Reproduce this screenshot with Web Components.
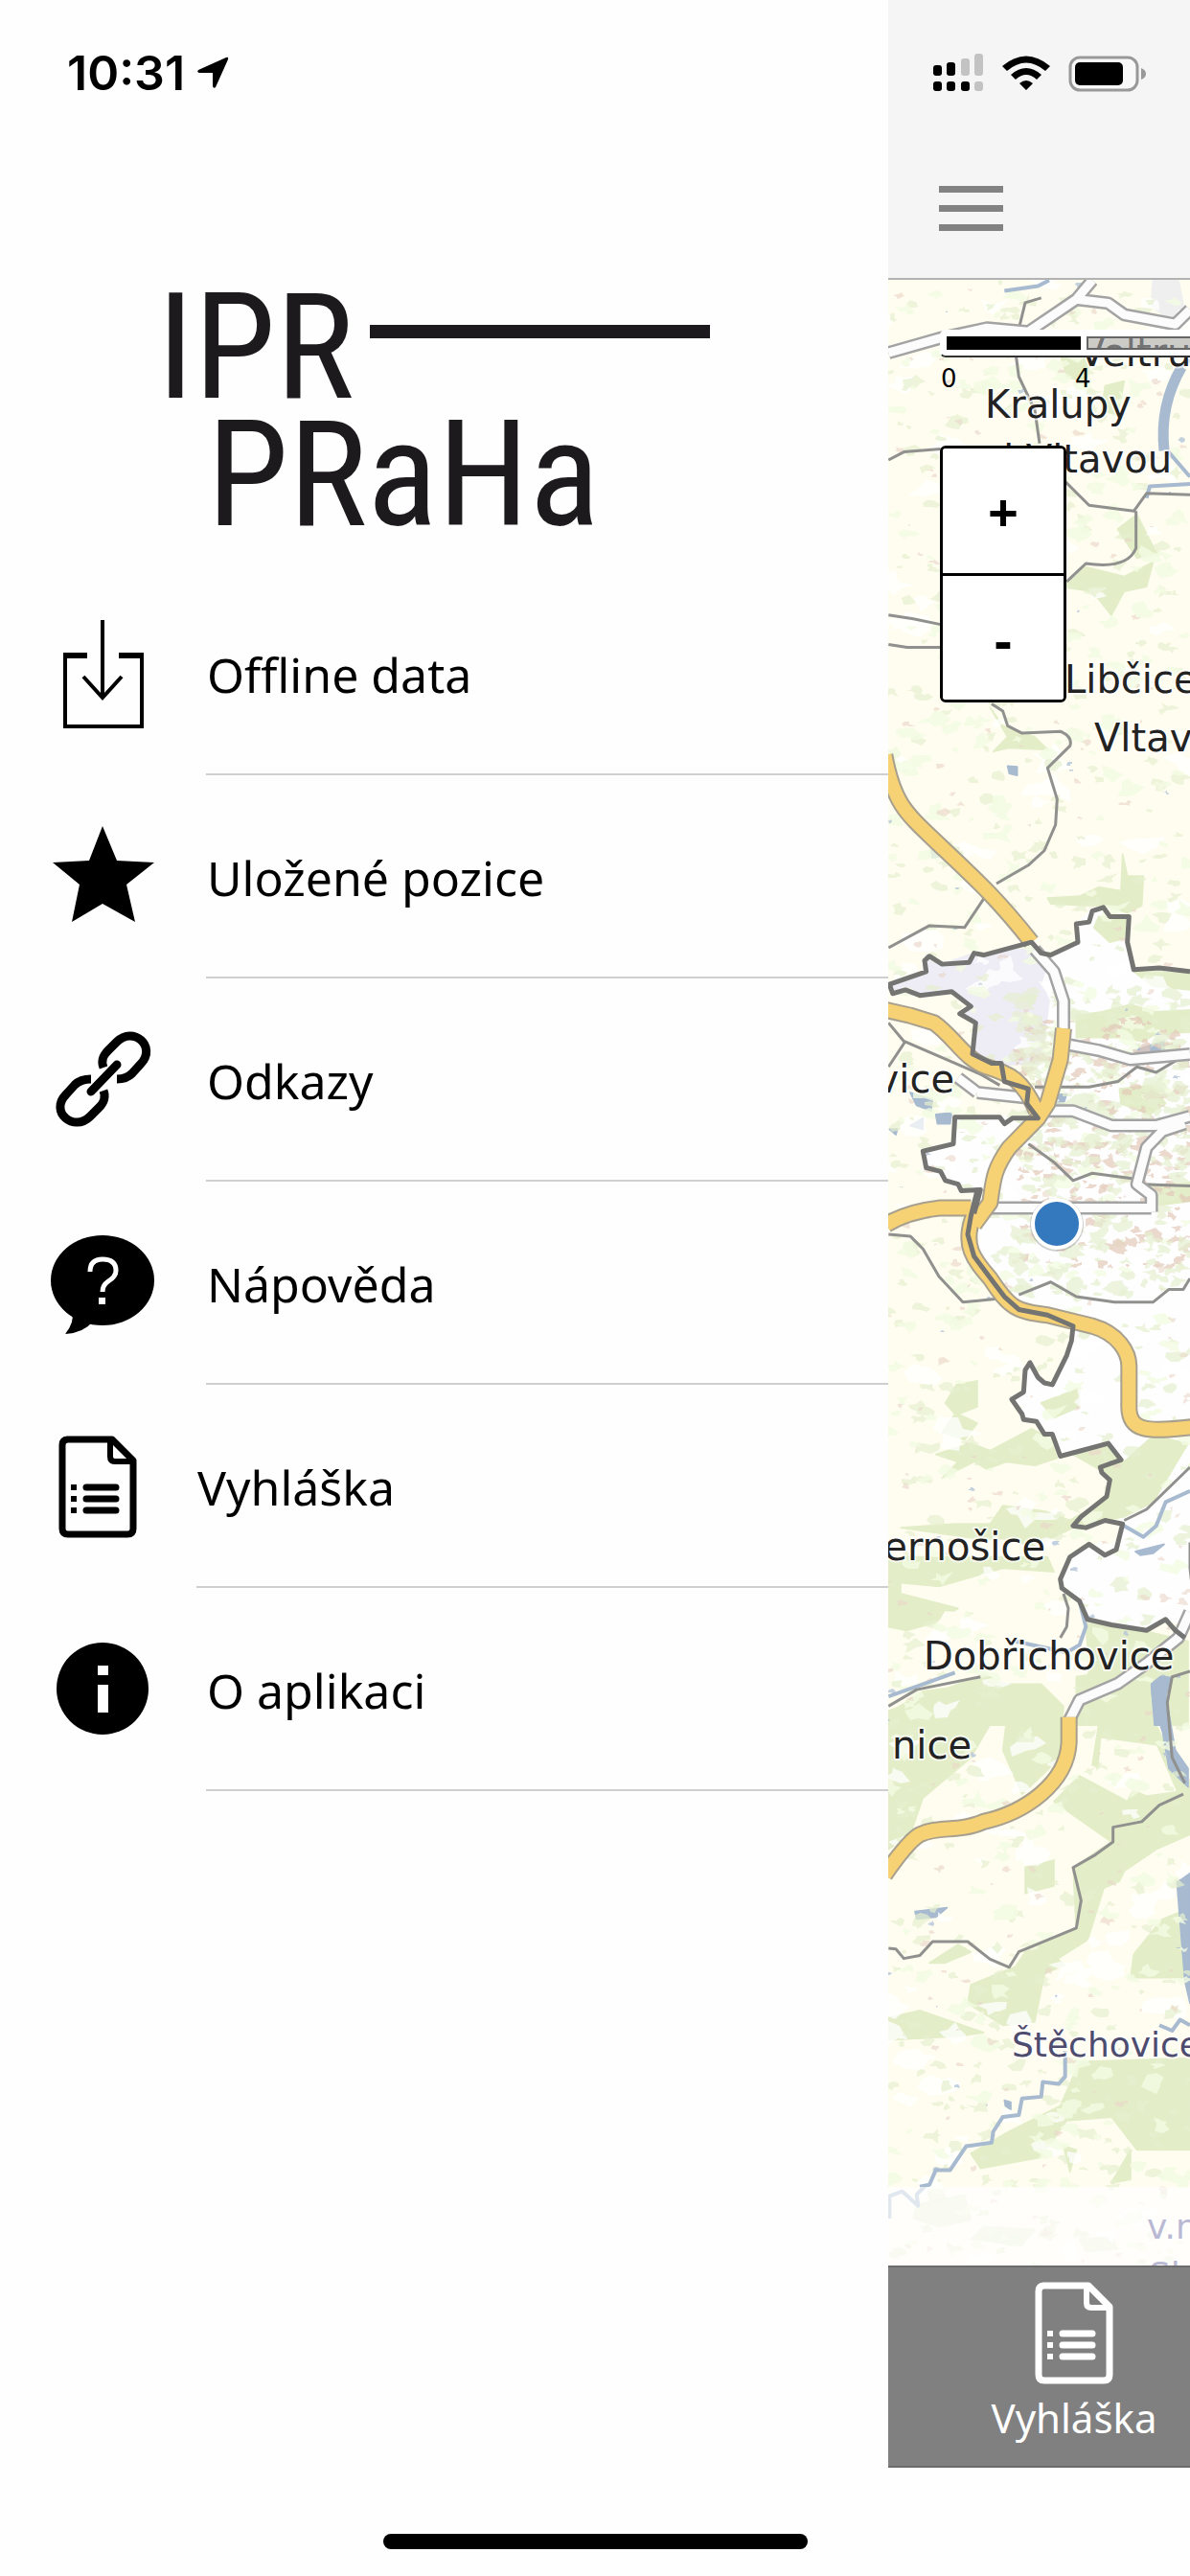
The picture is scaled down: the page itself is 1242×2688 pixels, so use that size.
<!DOCTYPE html>
<html lang="cs">
<head>
<meta charset="utf-8">
<meta name="viewport" content="width=device-width, initial-scale=1">
<title>IPR Praha</title>
<style>
  html, body { margin: 0; height: 100%; background: #fefefe; }
  body { font-family: "Noto Sans", "Open Sans", sans-serif; color: #000; }
</style>
</head>
<body>
<app-shell>
  <side-drawer slot="drawer">
    <menu-item href="#offline" icon="download">Offline data</menu-item>
    <menu-item href="#pozice" icon="star">Uložené pozice</menu-item>
    <menu-item href="#odkazy" icon="link">Odkazy</menu-item>
    <menu-item href="#napoveda" icon="help">Nápověda</menu-item>
    <menu-item href="#vyhlaska" icon="document">Vyhláška</menu-item>
    <menu-item href="#aplikace" icon="info">O aplikaci</menu-item>
  </side-drawer>
  <app-header slot="main"></app-header>
  <map-view slot="main">
    <scale-line></scale-line>
    <zoom-control></zoom-control>
  </map-view>
  <tab-bar slot="main"><tab-item icon="document">Vyhláška</tab-item></tab-bar>
</app-shell>

<script>
const ICONS = {
  download: ['52 644 110 116', '<g fill="none" stroke="#000"><path stroke-width="4" d="M107 646V725M87 705L107 727L127 705"/><path stroke-width="4" d="M68 681V757H148V681"/><path stroke-width="6" d="M66 683H91M124 683H150"/></g>'],
  star: ['52 856 110 116', '<path d="M107 861L122 897L161 899L132 922L141 961L107 942L75 961L83 922L55 899L93 897Z"/>'],
  link: ['52 1068 110 116', '<g fill="none" stroke="#000" stroke-width="9"><path d="M108 1113C105 1105 108 1100 113 1095L122 1086C139 1069 164 1091 147 1109L138 1119Q132 1125 122 1125"/><path d="M108 1137C111 1145 108 1150 103 1155L94 1164C77 1181 51 1159 69 1141L78 1131Q84 1125 95 1125"/><path stroke-linecap="round" d="M122 1110L95 1138"/></g>'],
  help: ['52 1280 110 116', '<ellipse cx="107" cy="1335" rx="54" ry="47"/><path d="M75 1368Q78 1379 68 1391Q87 1390 97 1378Z"/><path d="M94 1326Q94 1313 107 1313Q121 1313 121 1325Q121 1331 113 1336Q107 1340 107 1347" fill="none" stroke="#fff" stroke-width="5"/><rect x="103" y="1353" width="7" height="7" fill="#fff"/>'],
  document: ['53 1492 100 116', '<g fill="none" stroke="currentColor" stroke-width="7" stroke-linejoin="round"><path d="M71 1501H118L140 1523V1594Q140 1600 134 1600H72Q66 1600 66 1594V1507Q66 1501 72 1501Z"/><path stroke-width="6" d="M116 1502V1519Q116 1524 121 1524H140"/><path stroke-width="7" stroke-linecap="round" d="M91 1551H122M91 1563H122M91 1575H122"/><path stroke-width="6" d="M75 1551H81M75 1563H81M75 1575H81"/></g>'],
  info: ['52 1704 110 116', '<circle cx="107" cy="1761" r="48"/><path fill="#fff" d="M102 1737h11v10h-11zM102 1757h11v29h-11z"/>']
};
const icon = (name, height = 116) => {
  const [box, art] = ICONS[name];
  const width = Math.round(box.split(' ')[2] * height / 116);
  return `<svg viewBox="${box}" width="${width}" height="${height}" aria-hidden="true">${art}</svg>`;
};
const define = (name, html) => customElements.define(name, class extends HTMLElement {
  constructor() {
    super();
    this.attachShadow({ mode: 'open' });
  }
  connectedCallback() {
    this.shadowRoot.innerHTML = typeof html === 'function' ? html(this) : html;
  }
});

define('app-shell', `
  <style>
    :host { display: grid; grid-template-columns: minmax(0, 309fr) minmax(0, 105fr); min-height: 100vh; position: relative; overflow: hidden; }
    main { display: flex; flex-direction: column; padding-bottom: 113px; overflow: hidden; }
    .home { position: absolute; bottom: 28px; left: 50%; width: 443px; height: 16px; margin-left: -221px; border-radius: 8px; background: #000; }
  </style>
  <slot name="drawer"></slot>
  <main><slot name="main"></slot></main>
  <div class="home"></div>`);

define('side-drawer', `
  <style>
    :host { display: flex; flex-direction: column; background: #fefefe; }
    ipr-logo { margin: 144px 0 0 164px; }
    nav { display: flex; flex-direction: column; margin-top: 29px; }
  </style>
  <status-clock></status-clock>
  <ipr-logo></ipr-logo>
  <nav><slot></slot></nav>`);

define('status-clock', `
  <style>
    :host { display: flex; align-items: center; gap: 12px; height: 152px; padding-left: 70px; font: 600 50px Inter, "Liberation Sans", sans-serif; }
  </style>
  <time>10:31</time>
  <svg width="34" height="34" viewBox="0 0 34 34" aria-hidden="true"><path d="M31 1Q34 0 33 3L20 32Q18 34 17 31V17H3Q0 16 2 14Z"/></svg>`);

define('ipr-logo', `
  <style>
    :host { display: block; height: 272px; color: #1d1a1d; font: 400 154px/133px "Roboto Condensed", "Liberation Sans Narrow", "Liberation Sans", sans-serif; }
    .top { display: flex; align-items: center; gap: 16px; }
    .rule { width: 355px; height: 14px; margin-bottom: 34px; background: #1d1a1d; }
    .bottom { padding-left: 52px; }
  </style>
  <div class="top"><span>IPR</span><div class="rule"></div></div>
  <div class="bottom">PRaHa</div>`);

define('menu-item', host => `
  <style>
    :host { display: block; }
    a { display: flex; align-items: stretch; gap: 53px; height: 212px; padding-left: 52px; color: #000; text-decoration: none; font-size: 50px; line-height: 68px; }
    svg { flex: none; align-self: center; }
    span { display: flex; align-items: center; flex: 1; box-sizing: border-box; padding: 4px 0 0 1px; border-bottom: 2px solid #cfcfd1; }
  </style>
  <a href="${host.getAttribute('href')}">${icon(host.getAttribute('icon'))}<span><slot></slot></span></a>`);

define('app-header', `
  <style>
    :host { display: flex; flex-direction: column; flex: none; box-sizing: border-box; height: 292px; background: #f5f5f5; border-bottom: 2px solid #b2b2b2; }
    .status { display: flex; align-items: center; gap: 19px; padding: 55px 0 0 47px; height: 41px; }
    svg { flex: none; }
    button { display: flex; flex-direction: column; gap: 13px; margin: 98px 0 0 53px; width: 67px; padding: 0; border: 0; background: none; }
    i { height: 7px; width: 100%; background: #828282; }
  </style>
  <div class="status">
    <svg width="53" height="40" viewBox="0 0 53 40" aria-hidden="true"><g fill="#c3c3c3"><rect x="29" y="5" width="9" height="18" rx="3"/><rect x="43" width="9" height="23" rx="3"/><rect x="43" y="29" width="9" height="10" rx="3"/></g><rect y="12" width="9" height="11" rx="3"/><rect x="14" y="9" width="9" height="14" rx="3"/><rect y="29" width="9" height="10" rx="3"/><rect x="14" y="29" width="9" height="10" rx="3"/><rect x="29" y="29" width="9" height="10" rx="3"/></svg>
    <svg width="50" height="40" viewBox="0 0 50 40" aria-hidden="true"><path d="M0 13Q25 -8 50 13L45 18Q25 1 5 18ZM9 22Q25 8 41 22L36 27Q25 17 14 27ZM18 31Q25 25 32 31L25 38Z"/></svg>
    <svg width="82" height="40" viewBox="0 0 82 40" aria-hidden="true"><rect x="2" y="4" width="70" height="34" rx="10" fill="#fff" fill-opacity=".4" stroke="#999" stroke-width="3"/><rect x="7" y="9" width="50" height="24" rx="5"/><path d="M76 15Q81 17 81 21Q81 25 76 27Z" fill="#999"/></svg>
  </div>
  <button aria-label="Menu"><i></i><i></i><i></i></button>`);

define('zoom-control', `
  <style>
    :host { display: flex; flex-direction: column; width: 132px; box-sizing: border-box; border: 3px solid #000; border-radius: 6px; background: #fff; overflow: hidden; }
    button { height: 130px; padding: 0; border: 0; background: #fff; color: #000; font: 700 56px/60px "Noto Sans", sans-serif; }
    button + button { border-top: 3px solid #000; height: 132px; }
  </style>
  <button aria-label="+">+</button><button aria-label="-">-</button>`);

define('scale-line', `
  <style>
    :host { display: block; width: 720px; }
    .bar { display: flex; gap: 6px; height: 14px; padding: 6px; border: 1px solid #fff; border-bottom: 2px solid #333; border-radius: 6px; background: linear-gradient(#fff, #fff) 0 0 / 100% 6px no-repeat, linear-gradient(#fff, #fff) 0 100% / 100% 6px no-repeat, linear-gradient(#fff, #fff) 0 0 / 6px 100% no-repeat, linear-gradient(#fff, #fff) 146px 0 / 6px 100% no-repeat; }
    b { width: 140px; background: #000; }
    i { flex: 1; box-sizing: border-box; border: 2px solid #666; background: rgba(170, 170, 170, .6); }
    .marks { display: flex; font: 26px/32px "DejaVu Sans", sans-serif; padding: 6px 0 0 1px; }
    .marks span { flex: 0 0 140px; }
  </style>
  <div class="bar"><b></b><i></i></div>
  <div class="marks"><span>0</span><span>4</span></div>`);

define('tab-bar', `
  <style>
    :host { display: flex; flex: none; height: 211px; box-sizing: border-box; border: 2px solid #6c6c6c; border-width: 2px 0; background: #808080; overflow: hidden; }
  </style>
  <slot></slot>`);

define('tab-item', host => `
  <style>
    :host { display: block; flex: 0 0 388px; }
    button { display: flex; flex-direction: column; align-items: center; width: 100%; padding: 10px 0 0; border: 0; background: none; color: #fff; font: 42px/58px "Noto Sans", "Open Sans", sans-serif; }
    svg { margin-bottom: 2px; }
  </style>
  <button>${icon(host.getAttribute('icon'))}<span><slot></slot></span></button>`);

const SHEETS = {
  A: 'translate(920 0) scale(.33333 .49744)',
  B: 'translate(920 700) scale(.33333 .38265)',
  C: 'translate(920 1200) scale(.33333 .38265)',
  D: 'translate(920 1700) scale(.33333 .38265)',
  E: 'translate(920 2200) scale(.33333 .33333)'
};
const AREAS = [
  ['B', '#fefefe', 'M480 740L530 775L615 740L610 690L660 650L700 645L715 670L775 670L770 740L790 815L980 820V1580H290L350 1300L490 1220L480 1070Z'],
  ['C', '#fefefe', 'M300 110L270 230L350 360L430 440L600 480L580 560L535 640L490 620L465 580L450 600L445 660L408 680L440 720L485 740L510 775L535 775L560 835L710 800L750 845L685 865L715 900L705 945L755 1020L735 1090L700 1105L650 1075L590 1110L560 1170L620 1220L645 1280L720 1295L830 1310L890 1280L980 1300V0H300Z'],
  ['B', '#fefefe', 'M230 1215H480L350 1330L310 1415L245 1415L200 1390L140 1355L130 1310L225 1290Z'],
  ['B', '#eeecf4', 'M25 855L130 820L140 775L190 800L290 770L320 775L470 740L520 800L500 850L525 900L510 1000L490 1070L380 1075L285 1045L295 960L245 935L280 915L220 875L120 885L35 880Z'],
  ['A', '#efefef', 'M850 588H930L945 640L920 680L845 640Z'],
  ['A', '#e3eec9', 'M560 745L620 760L655 740L640 800L580 790ZM700 810L760 800L740 870L690 860ZM560 1230L640 1190L760 1210L850 1180L830 1230L760 1240L720 1290L660 1240ZM740 1110L800 1080L860 1160L800 1170Z'],
  ['B', '#e3eec9', 'M520 620L620 615L680 590L750 600L755 500L770 560L820 560L815 640L770 660L705 640L640 640L530 635ZM680 670L770 680L760 730L715 740L665 700ZM610 940L690 930L780 910L860 930L966 925V985L860 990L820 1010L740 1000L610 1000ZM790 820L966 825V870L850 860ZM745 1140L850 1130L890 1180L840 1210L750 1180ZM340 100L380 150L480 180L520 215L400 210L350 220L395 180Z'],
  ['C', '#e3eec9', 'M235 640L300 630V700L240 720L300 745L260 790L190 770L230 720L200 690ZM500 690L620 650V700L540 730ZM170 830L280 800L340 820L470 760L530 790L550 840L480 860L390 850L330 870L290 850L190 895L240 850ZM600 830L720 805L760 850L850 780L960 800L850 960L760 1000L700 1010L600 1030L480 1080L380 1060L300 1060L60 1030L230 1020L340 1020L380 970L510 985L590 1010L710 950L720 890L680 870ZM22 1110H520L540 1150L380 1140L180 1190L60 1180L60 1210L240 1250L160 1290L80 1310L22 1300ZM640 1290L840 1315L960 1340V1568H600L450 1480L320 1430L22 1530V1568H600L650 1420ZM850 100L966 90V140L870 150Z'],
  ['D', '#e3eec9', 'M22 230L130 170L300 150L500 150L570 210L560 350L440 450L380 330L390 260L340 260L280 350L130 460L90 560L22 600ZM610 130L840 100V220L880 300L900 360L966 420V560L860 600L760 660L700 770L640 890L510 940L480 1070L380 1080L270 1020L280 970L420 920L450 880L610 820L600 650L720 580L540 470L620 400L770 470L800 420L660 370L680 260L610 250ZM150 910L240 860L280 880L200 910ZM22 1060L120 1040L320 1100L240 1110L22 1120ZM450 650L540 630V700L450 720ZM800 820L966 760V950H780ZM620 1180L966 1170V1420H800L720 1330L580 1340L500 1440L310 1470L280 1430L400 1370L560 1300ZM570 1410L610 1420L590 1480ZM720 1510L780 1420V1500Z'],
  ['D', '#fffdf0', 'M690 300L860 320L920 440L830 450L680 400ZM700 710L830 660L900 760L780 890L640 960L560 900L650 850Z'],
  ['C', '#fffdf0', 'M680 1020L755 1020L735 1090L700 1105L650 1075ZM100 1330L320 1270L440 1350L300 1430L60 1480ZM200 1260L290 1265L270 1295L180 1290Z'],
  ['E', '#eef3dd', 'M110 300L260 270L280 350L180 370L100 345ZM320 370L480 380L440 430L280 410ZM620 410L720 400L740 440L640 450Z'],
  ['B', '#a7bad0', 'M90 1150L160 1170L155 1200L110 1185ZM170 1210L220 1205L215 1235L175 1235ZM90 1240L130 1220V1250ZM25 1250L50 1250L45 1265ZM395 260L425 262L425 285L400 280ZM155 490L185 505L160 510ZM790 1035L885 1010V1045L810 1045ZM530 1155L580 1155L570 1180L540 1180Z'],
  ['C', '#a7bad0', 'M795 1095L885 1075L850 1100L810 1105ZM845 1460L880 1435L910 1440L885 1500L895 1568H855Z'],
  ['D', '#a7bad0', 'M845 150L880 125L905 140L890 180L920 330L960 380V430L900 380L880 280L850 200ZM925 690L966 665V1020L950 960ZM105 770L205 760L170 785L110 790ZM385 1285L405 1290V1310L388 1300Z']
];
const LINES = [
  ['A', 'river', 'M385 610L490 600L525 588M966 755L935 770'], ['C', 'river', 'M760 1025L820 1055L860 1025L890 960L966 930M560 1190L620 1230L640 1300L620 1350L580 1370L420 1340M22 1490L120 1460L230 1425'],
  ['D', 'river', 'M575 1150V1220L555 1240L505 1235L500 1275L440 1280L430 1325L380 1330L350 1370L345 1400L265 1410L215 1475L170 1475L150 1515L120 1520M966 1080L935 1065L910 1095L870 1080'],
  ['E', 'river', 'M140 240L110 270L115 305L65 260L25 275V345'], ['A', 'bigriver', 'M940 770Q870 850 885 945'], ['A', 'river', 'M895 945L966 1000M966 1015L840 1020L830 1045'],
  ['A', 'thin', 'M500 625L450 635L430 690M420 740L430 790L480 860L495 930M22 965L70 948L185 942M22 1290L100 1298L185 1310M22 1352L80 1358H185M575 1010L650 1060L790 1072L830 1035L966 1038M797 1072V1150Q770 1195 640 1182L580 1220'],
  ['B', 'thin', 'M345 90L380 110L395 150L440 170L560 165Q600 180 590 205L520 265L550 350L545 420L510 490L460 530L360 580M325 615L260 700L150 695L22 755M22 960L70 1010L150 1040L310 1100L370 1130M22 1080L75 1010M590 1135L650 1135L740 1120L800 1080L860 1095L966 1040M460 1290L540 1340L600 1390L660 1370L790 1385M810 1400L966 1405M480 1135H590'],
  ['C', 'thin', 'M22 230L90 235L130 270L180 345L255 415L370 405M430 395L530 360L610 400L730 415L850 415L900 380L945 380L966 350M760 1010L830 980L966 865M570 1210L585 1250L580 1300L560 1330M966 1070V1140L980 1250'],
  ['D', 'thin', 'M22 210L110 165L310 130M945 450L870 480L815 525L725 540V580L670 615L600 650L625 740L610 815L430 880L400 922L340 900L270 852L160 852L120 890L70 898L45 872L22 870M966 115L910 130L895 200L910 350L950 420'],
  ['A', 'white', 'M22 740L180 710L330 688L460 696L610 628L660 588M610 628L710 636L760 660L920 680L966 650'],
  ['B', 'white', 'M480 760L540 820L570 900V980M590 1020L680 1035L780 1060L966 1045M520 1200L600 1200L720 1240L860 1240L966 1215M950 1235L880 1255L830 1300L800 1400L845 1430V1475M340 1465H845M300 1150L240 1110M300 1150L460 1165'],
  ['C', 'white', 'M966 1260L930 1330L830 1400L740 1455L620 1500L585 1560'],
  ['B', 'yellow', 'M10 230C40 370 80 390 200 490C310 580 370 630 470 740'],
  ['B', 'yellow', 'M15 925L90 940L165 960C230 1000 260 1060 330 1080C400 1100 440 1110 485 1200'],
  ['B', 'yellow', 'M570 975L560 1060L520 1180L490 1220L400 1300C350 1360 350 1390 340 1450L290 1510'],
  ['B', 'yellow', 'M15 1510Q80 1475 180 1465H280'],
  ['C', 'yellow', 'M290 175C250 260 290 300 340 350C400 430 420 440 520 450L660 480C740 500 775 550 775 590V690C770 770 830 770 980 755'],
  ['D', 'yellow', 'M587 240V310C580 420 450 500 320 525C240 555 180 535 120 560C90 575 50 620 10 670'],
  ['B', 'border', 'M966 820L870 810L790 815L770 740L775 670L715 670L695 645L660 655L650 685L610 690L615 740L530 775L500 770L470 740L320 775L290 770L275 795L190 800L150 778L135 790L140 820L25 855L35 880L75 870L120 885L220 875L280 915L245 935L295 960L285 1045L345 1070L375 1070L385 1120L460 1140L455 1180L490 1220H410L385 1235L370 1217H230L225 1290L130 1310L140 1355L185 1365L200 1390L240 1400L250 1418L310 1415L290 1480'],
  ['C', 'border', 'M300 110L280 180L270 230L290 290L350 360L385 400L430 435L520 450L600 480L595 520L580 560L535 640L510 635L490 620L465 580L450 600L445 660L408 680L440 720L445 735L485 740L510 775L535 775L560 835L625 820L710 800L750 845L685 865L690 880L715 900L705 945L625 1000L600 1025L640 1030L700 1010L755 1020L735 1090L700 1105L650 1075L590 1110L560 1170L565 1195L620 1230L645 1280L720 1295L830 1310L890 1280L920 1310L950 1330']
];
const LAYERS = [
  ['river', '#a7bad0', 4], ['bigriver', '#a7bad0', 11], ['thin', '#90908e', 3],
  ['white', '#a3a3a3', 14], ['white', '#fcfcfc', 9], ['yellow', '#a8a08e', 18], ['yellow', '#f7d274', 14], ['border', '#747472', 5]
];
const LABELS = [
  [1126, 382, 'Veltrusy'], [1028, 436, 'Kralupy'], [1223, 493, 'nad Vltavou', 'end'], [1111, 723, 'Libčice'],
  [1142, 784, 'Vltavou'], [996, 1140, 'vice', 'end'], [1091, 1628, 'ernošice', 'end'], [964, 1742, 'Dobřichovice'], [1014, 1835, 'nice', 'end'],
  [1056, 2146, 'Štěchovice', 'start', '#4d4c6e', 'minor'], [1197, 2336, 'v.n', 'start', '#b9b9d4', 'minor'], [1199, 2386, 'Sl', 'start', '#b9b9d4', 'minor']
];
/* Small scattered fields, woods and built-up blocks; seeded so each load draws the same. */
const speckle = () => {
  let seed = 11;
  const rnd = () => (seed = (seed * 16807) % 2147483647) / 2147483647;
  const blob = (x, y, r) => {
    let d = '';
    for (let k = 0; k < 9; k++) {
      const a = k * Math.PI * 2 / 9, q = r * (.25 + rnd() * 1.1);
      d += `${k ? 'L' : 'M'}${Math.round(x + Math.cos(a) * q * 1.6)} ${Math.round(y + Math.sin(a) * q)}`;
    }
    return d + 'Z';
  };
  const fields = [['#ffffff', 170, 11, 0, 2072, .75], ['#e6f0cf', 620, 5, 0, 2072, .7], ['#f2fbe2', 420, 7, 0, 2072, .8], ['#e9d5c8', 260, 3, 0, 2072, .6], ['#e3c9b9', 260, 4, 770, 260, .7], ['#e6f0d0', 240, 6, 740, 320, .7], ['#b4c4d8', 50, 2, 0, 2072, .8]];
  return fields.map(([fill, n, r, top, span, alpha]) => {
    let d = '';
    for (let k = 0; k < n; k++) d += blob((top ? 1060 : 927) + rnd() * (top ? 182 : 315), 292 + top + rnd() * span, r * (.4 + rnd()));
    return `<path fill="${fill}" fill-opacity="${alpha}" d="${d}"/>`;
  }).join('');
};
const drawMap = () => {
  const areas = AREAS.map(([s, fill, d]) => `<path transform="${SHEETS[s]}" fill="${fill}" stroke="${fill}" stroke-width="5" stroke-linejoin="round" d="${d}"/>`).join('');
  const lines = LAYERS.map(([kind, colour, width]) => LINES.filter(l => l[1] === kind).map(([s, , d]) =>
    `<path transform="${SHEETS[s]}" d="${d}" fill="none" stroke="${colour}" stroke-width="${width}" stroke-linejoin="round" vector-effect="non-scaling-stroke"/>`).join('')).join('');
  const labels = LABELS.map(([x, y, t, anchor = 'start', fill = '#222', size = 'major']) =>
    `<text class="${size}" x="${x}" y="${y}" text-anchor="${anchor}" fill="${fill}">${t}</text>`).join('');
  return areas + speckle() + lines + '<rect x="927" y="2282" width="315" height="82" fill="#fff" fill-opacity=".65"/>' + labels +
    '<circle cx="1103" cy="1278" r="28" fill="#777" fill-opacity=".35"/><circle cx="1103" cy="1277" r="25" fill="#3478bd" stroke="#fff" stroke-width="4"/>';
};
define('map-view', () => `
  <style>
    :host { display: block; flex: 1; min-height: 600px; position: relative; overflow: hidden; background: #fffdf0; }
    svg { position: absolute; inset: 0; width: 100%; height: 100%; }
    text { font: 40px "DejaVu Sans", sans-serif; paint-order: stroke; stroke: #fff; stroke-opacity: .7; stroke-width: 4px; stroke-linejoin: round; }
    .minor { font-size: 36px; }
    .tools { position: relative; display: flex; flex-direction: column; gap: 54px; padding: 52px 0 0 54px; }
  </style>
  <svg viewBox="927 292 315 2072" preserveAspectRatio="xMinYMin slice" role="img" aria-label="Mapa">${drawMap()}</svg>
  <div class="tools"><slot></slot></div>`);
</script>
</body>
</html>
